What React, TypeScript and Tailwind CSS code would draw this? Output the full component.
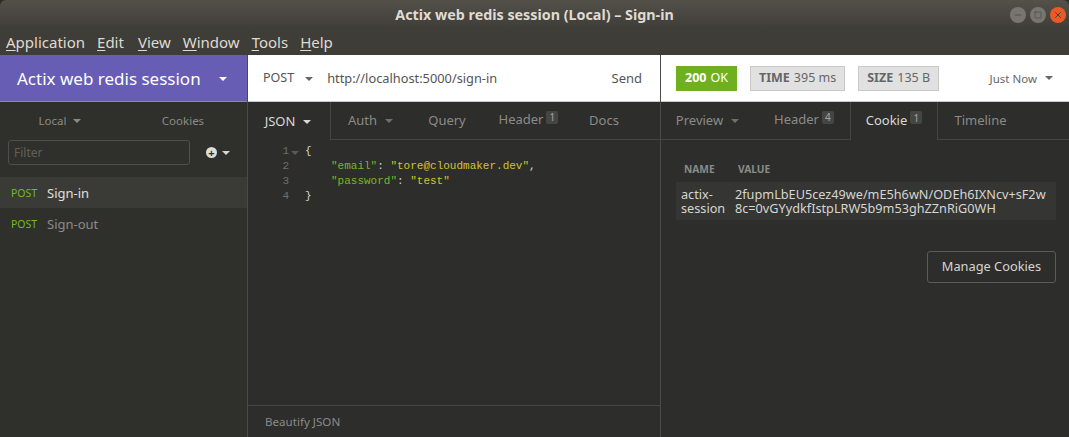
import { Minus, Square, X } from 'lucide-react'

function Caret({ className = 'border-t-[#8a8a86]' }: { className?: string }) {
  return <span className={`inline-block h-0 w-0 border-x-[4px] border-t-[4px] border-x-transparent ${className}`} />
}

function Badge({ n }: { n: number }) {
  return (
    <span className="ml-[3px] mt-[-6px] flex h-[13px] w-[12px] items-center justify-center rounded-[2px] bg-[#454543] text-[10px] leading-none text-[#a5a5a2]">
      {n}
    </span>
  )
}

function Tab({ label, badge, caret, active, width }: { label: string; badge?: number; caret?: boolean; active?: boolean; width: string }) {
  return (
    <div
      className={`flex h-full items-center justify-center ${badge !== undefined ? 'pb-[1px]' : 'pt-[1px]'} ${width} ${
        active ? 'text-[#d9d9d6]' : 'border-b border-[#454543] text-[#8b8b88]'
      }`}
    >
      <span>{label}</span>
      {badge !== undefined && <Badge n={badge} />}
      {caret && <span className="ml-[8px] flex"><Caret className={active ? 'border-t-[#d9d9d6]' : 'border-t-[#6f6f6c]'} /></span>}
    </div>
  )
}

function Metric({ label, value }: { label: string; value: string }) {
  return (
    <div className="flex h-[25px] items-center border border-[#c9c9c9] bg-[#e1e1e1] px-[8px] text-[12.5px] text-[#666]">
      <b className="mr-[4px] font-bold">{label}</b>
      {value}
    </div>
  )
}

function RequestRow({ name, active }: { name: string; active?: boolean }) {
  return (
    <div className={`flex h-[31px] items-center pl-[11px] pt-[2px] ${active ? 'bg-[#3a3b37] text-[#e0e0dd]' : 'text-[#8b8b88]'}`}>
      <span className="w-[36px] text-[10.5px] text-[#75b72a]">POST</span>
      <span className="text-[13px]">{name}</span>
    </div>
  )
}

const lineNumbers = [1, 2, 3, 4]

export default function App() {
  return (
    <div className="flex h-[437px] w-[1069px] flex-col overflow-hidden bg-[#2d2d2b] font-['Noto_Sans',sans-serif] text-[13px]">
      {/* Title bar */}
      <div className="relative flex h-[29px] items-center justify-center rounded-t-[6px] bg-gradient-to-b from-[#54514b] to-[#3f3d38] pt-[1px] text-[14.3px] font-bold text-[#dfdbd2]">
        Actix web redis session (Local) – Sign-in
        <div className="absolute right-[3px] top-[7px] flex gap-[4px]">
          <span className="flex h-[16px] w-[16px] items-center justify-center rounded-full bg-[#77756f] text-[#3b3a36]"><Minus size={10} strokeWidth={1.5} /></span>
          <span className="flex h-[16px] w-[16px] items-center justify-center rounded-full bg-[#77756f] text-[#3b3a36]"><Square size={8} strokeWidth={1.5} /></span>
          <span className="flex h-[16px] w-[16px] items-center justify-center rounded-full bg-[#e95a26] text-[#3b3a36]"><X size={10} strokeWidth={2} /></span>
        </div>
      </div>
      {/* Menu bar */}
      <div className="flex h-[26px] items-center gap-[12px] bg-[#3f3d38] pl-[6px] pt-[1px] text-[15px] text-[#dfdbd2]">
        {[['A', 'pplication'], ['E', 'dit'], ['V', 'iew'], ['W', 'indow'], ['T', 'ools'], ['H', 'elp']].map(([first, rest]) => (
          <span key={first} className={first === 'E' ? 'mr-[2px]' : ''}>
            <span className="underline underline-offset-2">{first}</span>
            {rest}
          </span>
        ))}
      </div>

      <div className="flex min-h-0 flex-1">
        {/* Sidebar */}
        <aside className="flex w-[248px] shrink-0 flex-col border-r border-[#4a4a47] bg-[#2f302c]">
          <div className="flex h-[47px] items-center justify-between border-b border-[#8d8ba0] bg-[#675db5] pl-[17px] pr-[20px] pt-[1px] text-[17px] text-white">
            Actix web redis session
            <Caret className="border-t-white" />
          </div>
          <div className="flex h-[37px] items-center text-[11.5px] text-[#8b8b88]">
            <div className="flex w-[120px] items-center justify-center gap-[7px]">
              Local <Caret />
            </div>
            <div className="w-[126px] text-center">Cookies</div>
          </div>
          <div className="mt-[1px] flex items-center pl-[8px]">
            <div className="flex h-[25px] w-[182px] items-center rounded-[3px] border border-[#4e4f4b] pl-[5px] text-[12px] text-[#5f605c]">
              Filter
            </div>
            <span className="ml-[16px] flex h-[11px] w-[11px] items-center justify-center rounded-full bg-[#dcdcd9]">
              <span className="text-[11px] font-bold leading-none text-[#2f302c]">+</span>
            </span>
            <span className="ml-[5px] flex"><Caret className="border-t-[#d5d5d2]" /></span>
          </div>
          <div className="mt-[12px]">
            <RequestRow name="Sign-in" active />
            <RequestRow name="Sign-out" />
          </div>
        </aside>

        {/* Request pane */}
        <section className="flex w-[413px] shrink-0 flex-col border-r border-[#4a4a47]">
          <div className="flex h-[47px] items-center border-b border-[#c8c8c8] bg-white pl-[15px] pr-[18px] pt-[1px] text-[#555]">
            <span className="mr-[11px] text-[12.5px]">POST</span>
            <Caret className="border-t-[#666]" />
            <span className="ml-[14px] flex-1 text-[12.8px]">http://localhost:5000/sign-in</span>
            <span className="text-[13px]">Send</span>
          </div>
          <div className="flex h-[38px] text-[13px]">
            <div className="h-full w-[83px] border-r border-[#454543]">
              <Tab label="JSON" caret active width="w-full pr-[2px]" />
            </div>
            <Tab label="Auth" caret width="w-[79px]" />
            <Tab label="Query" width="w-[74px]" />
            <Tab label="Header" badge={1} width="w-[89px]" />
            <Tab label="Docs" width="w-[62px]" />
            <div className="h-full flex-1 border-b border-[#454543]" />
          </div>
          <div className="flex min-h-0 flex-1 pt-[4px] font-['Liberation_Mono',monospace] text-[11px] leading-[15px]">
            <div className="w-[41px] text-right text-[#6f6f6c]">
              {lineNumbers.map((n) => (
                <div key={n}>{n}</div>
              ))}
            </div>
            <div className="w-[16px] pl-[2px] pt-[1px]">
              <Caret className="border-t-[#5a5a58]" />
            </div>
            <div className="text-[#d5d5d2]">
              <div>{'{'}</div>
              <div className="pl-[26px]">
                <span className="text-[#75b72a]">"email"</span>: <span className="text-[#cfc52f]">"tore@cloudmaker.dev"</span>,
              </div>
              <div className="pl-[26px]">
                <span className="text-[#75b72a]">"password"</span>: <span className="text-[#cfc52f]">"test"</span>
              </div>
              <div>{'}'}</div>
            </div>
          </div>
          <div className="flex h-[32px] items-center border-t border-[#454543] pl-[17px] pt-[1px] text-[11.6px] text-[#8b8b88]">
            Beautify JSON
          </div>
        </section>

        {/* Response pane */}
        <section className="flex min-w-0 flex-1 flex-col">
          <div className="flex h-[47px] items-center border-b border-[#c8c8c8] bg-white pl-[15px] pr-[16px]">
            <div className="flex h-[25px] items-center bg-[#6fb021] px-[9px] text-[12.5px] text-white">
              <b className="mr-[4px] font-bold">200</b>OK
            </div>
            <div className="ml-[13px] flex gap-[13px]">
              <Metric label="TIME" value="395 ms" />
              <Metric label="SIZE" value="135 B" />
            </div>
            <span className="ml-auto pt-[1px] text-[11.5px] text-[#666]">Just Now</span>
            <span className="ml-[8px] flex"><Caret className="border-t-[#666]" /></span>
          </div>
          <div className="flex h-[38px] text-[13px]">
            <Tab label="Preview" caret width="w-[97px] pr-[4px]" />
            <Tab label="Header" badge={4} width="w-[92px]" />
            <div className="h-full w-[88px] border-x border-[#454543]">
              <Tab label="Cookie" badge={1} active width="w-full" />
            </div>
            <div className="h-full flex-1 border-b border-[#454543]">
              <div className="flex h-full w-[85px] items-center justify-center pt-[1px] text-[#8b8b88]">Timeline</div>
            </div>
          </div>
          <div className="flex flex-col pl-[15px] pr-[13px] pt-[22px]">
            <div className="flex text-[10.2px] font-bold leading-[14px] text-[#8b8b88]">
              <span className="w-[54px] pl-[8px]">NAME</span>
              <span className="pl-[8px]">VALUE</span>
            </div>
            <div className="mt-[6px] flex h-[38px] items-center bg-[#353533] text-[12.7px] leading-[14px] text-[#d5d5d2]">
              <div className="w-[59px] pl-[5px]">actix-<br />session</div>
              <div className="whitespace-nowrap">
                2fupmLbEU5cez49we/mE5h6wN/ODEh6IXNcv+sF2w<br />8c=0vGYydkfIstpLRW5b9m53ghZZnRiG0WH
              </div>
            </div>
            <button className="mt-[31px] flex h-[32px] w-[129px] items-center justify-center self-end rounded-[3px] border border-[#5b5b58] text-[12.8px] text-[#d5d5d2]">
              Manage Cookies
            </button>
          </div>
        </section>
      </div>
    </div>
  )
}
